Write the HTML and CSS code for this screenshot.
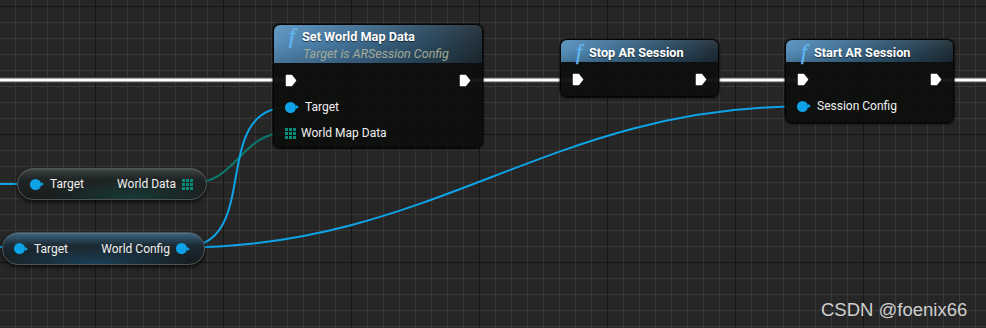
FILE: index.html
```html
<!DOCTYPE html>
<html>
<head>
<meta charset="utf-8">
<link rel="stylesheet" href="styles.css">
</head>
<body>
<div class="graph">
  <svg class="wires" width="986" height="328" viewBox="0 0 986 328">
    <g class="exec-wire">
      <line x1="-5" y1="80" x2="290" y2="80"/>
      <line x1="466" y1="80" x2="578" y2="80"/>
      <line x1="703" y1="80" x2="801" y2="80"/>
      <line x1="938" y1="80" x2="990" y2="80"/>
    </g>
    <g class="exec-core">
      <line x1="-5" y1="80" x2="290" y2="80"/>
      <line x1="466" y1="80" x2="578" y2="80"/>
      <line x1="703" y1="80" x2="801" y2="80"/>
      <line x1="938" y1="80" x2="990" y2="80"/>
    </g>
    <path class="wire blue" d="M -10 184 L 35 184"/>
    <path class="wire blue" d="M -150 236 C -80 236, -50 247.5, 19.5 247.5"/>
    <path class="wire teal" d="M 188 184 C 239 184, 238.5 132, 289.5 132"/>
    <path class="wire blue" d="M 182 247.5 C 265 247.5, 206.5 107, 289.5 107"/>
    <path class="wire blue" d="M 182 247.5 C 435 247.5, 548.5 106.5, 801.5 106.5"/>
  </svg>

  <div class="node fn node-setmap">
    <div class="header tall">
      <div class="title"><span class="fn-icon">f</span><span class="title-text">Set World Map Data</span></div>
      <div class="subtitle">Target is ARSession Config</div>
    </div>
    <div class="body">
      <div class="row">
        <svg class="exec" width="12" height="13" viewBox="0 0 12 13"><path d="M1.5 1.5 H6.5 L10.5 6.5 L6.5 11.5 H1.5 Z"/></svg>
        <svg class="exec" width="12" height="13" viewBox="0 0 12 13"><path d="M1.5 1.5 H6.5 L10.5 6.5 L6.5 11.5 H1.5 Z"/></svg>
      </div>
      <div class="row">
        <div class="pin-in"><span class="dot-pin"></span><span class="label">Target</span></div>
      </div>
      <div class="row">
        <div class="pin-in grid-in"><span class="grid-pin"><i></i><i></i><i></i><i></i><i></i><i></i><i></i><i></i><i></i></span><span class="label">World Map Data</span></div>
      </div>
    </div>
  </div>

  <div class="node fn node-stop">
    <div class="header">
      <div class="title"><span class="fn-icon">f</span><span class="title-text">Stop AR Session</span></div>
    </div>
    <div class="body">
      <div class="row">
        <svg class="exec" width="12" height="13" viewBox="0 0 12 13"><path d="M1.5 1.5 H6.5 L10.5 6.5 L6.5 11.5 H1.5 Z"/></svg>
        <svg class="exec" width="12" height="13" viewBox="0 0 12 13"><path d="M1.5 1.5 H6.5 L10.5 6.5 L6.5 11.5 H1.5 Z"/></svg>
      </div>
    </div>
  </div>

  <div class="node fn node-start">
    <div class="header">
      <div class="title"><span class="fn-icon">f</span><span class="title-text">Start AR Session</span></div>
    </div>
    <div class="body">
      <div class="row">
        <svg class="exec" width="12" height="13" viewBox="0 0 12 13"><path d="M1.5 1.5 H6.5 L10.5 6.5 L6.5 11.5 H1.5 Z"/></svg>
        <svg class="exec" width="12" height="13" viewBox="0 0 12 13"><path d="M1.5 1.5 H6.5 L10.5 6.5 L6.5 11.5 H1.5 Z"/></svg>
      </div>
      <div class="row">
        <div class="pin-in"><span class="dot-pin"></span><span class="label">Session Config</span></div>
      </div>
    </div>
  </div>

  <div class="node pill pill-data">
    <div class="pin-in"><span class="dot-pin"></span><span class="label">Target</span></div>
    <div class="pin-out"><span class="label">World Data</span><span class="grid-pin"><i></i><i></i><i></i><i></i><i></i><i></i><i></i><i></i><i></i></span></div>
  </div>

  <div class="node pill pill-config">
    <div class="pin-in"><span class="dot-pin"></span><span class="label">Target</span></div>
    <div class="pin-out"><span class="label">World Config</span><span class="dot-pin"></span></div>
  </div>

  <div class="watermark">CSDN @foenix66</div>
</div>
</body>
</html>
```

FILE: styles.css
```css
html, body {
  margin: 0;
  padding: 0;
}

body {
  width: 986px;
  height: 328px;
  overflow: hidden;
  font-family: Roboto, "Liberation Sans", sans-serif;
}

.graph {
  position: relative;
  width: 986px;
  height: 328px;
  background-color: #262626;
  background-image:
    linear-gradient(to right, #161616 0, #161616 1.5px, transparent 1.5px),
    linear-gradient(to bottom, #161616 0, #161616 1.5px, transparent 1.5px),
    linear-gradient(to right, #383838 0, #383838 1px, transparent 1px),
    linear-gradient(to bottom, #383838 0, #383838 1px, transparent 1px);
  background-size: 128px 328px, 986px 128px, 16px 328px, 986px 16px;
  background-position: 95px 0, 0 6px, 15px 0, 0 6px;
  overflow: hidden;
}

.wires {
  position: absolute;
  left: 0;
  top: 0;
}

.exec-wire line {
  stroke: #8d8d8d;
  stroke-width: 4.5;
}

.exec-core line {
  stroke: #ffffff;
  stroke-width: 2.5;
}

.wire {
  fill: none;
  stroke-width: 2;
}

.wire.blue {
  stroke: #0ea2e6;
}

.wire.teal {
  stroke: #0b7a6c;
}

.node {
  position: absolute;
  box-sizing: border-box;
}

.fn {
  background: rgba(14, 16, 14, 0.96);
  border: 1px solid #050505;
  border-radius: 7px;
  box-shadow: 0 1px 3px rgba(0, 0, 0, 0.7), 0 0 0 1px rgba(0, 0, 0, 0.35);
  display: flex;
  flex-direction: column;
}

.node-setmap {
  left: 273px;
  top: 24px;
  width: 210px;
  height: 124px;
}

.node-stop {
  left: 560px;
  top: 39px;
  width: 159px;
  height: 58px;
}

.node-start {
  left: 785px;
  top: 39px;
  width: 169px;
  height: 84px;
}

.header {
  height: 23px;
  box-sizing: border-box;
  padding: 4px 10px 0 11px;
  border-radius: 6px 6px 0 0;
  background:
    linear-gradient(180deg, rgba(255, 255, 255, 0.07) 0%, rgba(255, 255, 255, 0) 50%, rgba(0, 0, 0, 0.18) 100%),
    linear-gradient(90deg, #5790bb 0%, #3f6e92 35%, #2b4a60 70%, #1f2d37 100%);
  border-bottom: 1px solid #0c0f12;
}

.header.tall {
  height: 39px;
  padding-top: 3px;
  background:
    linear-gradient(180deg, rgba(255, 255, 255, 0.06) 0%, rgba(255, 255, 255, 0) 40%, rgba(0, 0, 0, 0.2) 100%),
    linear-gradient(90deg, #5a93bf 0%, #43739a 35%, #2e4f66 70%, #222f38 100%);
}

.title {
  display: flex;
  align-items: center;
  height: 16px;
}

.fn-icon {
  font-family: "Liberation Serif", "DejaVu Serif", serif;
  font-style: italic;
  font-size: 21px;
  color: #62b6f0;
  width: 14px;
  line-height: 16px;
  margin-right: 3px;
  text-align: center;
  -webkit-text-stroke: 0.4px #62b6f0;
}

.title-text {
  font-weight: bold;
  font-size: 12.7px;
  color: #ffffff;
  text-shadow: 0 1px 1px rgba(0, 0, 0, 0.6);
}

.subtitle {
  font-style: italic;
  font-size: 12.5px;
  color: #a3ab98;
  margin-left: 18px;
  margin-top: 3px;
  line-height: 14px;
}

.body {
  display: flex;
  flex-direction: column;
  gap: 4px;
  padding: 5px 11px 0 11px;
}

.row {
  height: 22px;
  display: flex;
  align-items: center;
  justify-content: space-between;
}

.row + .row {
  padding-top: 2px;
  box-sizing: border-box;
}

.exec path {
  fill: #ffffff;
  stroke: #ffffff;
  stroke-width: 1.5;
  stroke-linejoin: round;
}

.pin-in, .pin-out {
  display: flex;
  align-items: center;
}

.label {
  font-size: 12px;
  color: #f0f0f0;
  line-height: 14px;
}

.dot-pin {
  position: relative;
  width: 11px;
  height: 11px;
  border-radius: 50%;
  background: #0ea2e6;
  margin-right: 9px;
  flex: none;
}

.dot-pin::after {
  content: "";
  position: absolute;
  right: -3px;
  top: 3.5px;
  border-left: 3px solid #0ea2e6;
  border-top: 2px solid transparent;
  border-bottom: 2px solid transparent;
}

.grid-pin {
  width: 11px;
  height: 11px;
  display: grid;
  grid-template-columns: repeat(3, 3px);
  grid-template-rows: repeat(3, 3px);
  gap: 1px;
  margin-right: 5px;
  flex: none;
}

.grid-pin i {
  background: #0a8c7a;
}

.pill {
  display: flex;
  align-items: center;
  justify-content: space-between;
  border-radius: 16px;
  border: 1px solid #4e5354;
  box-shadow: 0 2px 4px rgba(0, 0, 0, 0.75), inset 0 1px 0 rgba(255, 255, 255, 0.1);
  padding: 0 13px 0 12px;
}

.pill-data {
  left: 17px;
  top: 168px;
  width: 190px;
  height: 32px;
  background:
    radial-gradient(ellipse 45% 60% at 60% 95%, rgba(20, 110, 100, 0.35), rgba(20, 110, 100, 0) 100%),
    linear-gradient(180deg, #3a4242 0%, #1f2424 35%, #181c1c 100%);
}

.pill-config {
  left: 2px;
  top: 232px;
  width: 203px;
  height: 33px;
  padding-left: 11px;
  padding-right: 14px;
  background:
    radial-gradient(ellipse 50% 55% at 45% 100%, rgba(30, 120, 170, 0.4), rgba(30, 120, 170, 0) 100%),
    linear-gradient(180deg, #3a6682 0%, #1c2a33 40%, #171c20 100%);
}

.pill .pin-out .label {
  margin-right: 6px;
}

.pill .pin-out .dot-pin {
  margin-right: 3px;
}

.pill .pin-out .grid-pin {
  margin-right: 0;
}

.watermark {
  position: absolute;
  left: 821px;
  top: 299px;
  font-family: "Liberation Sans", Arial, sans-serif;
  font-size: 18.5px;
  color: #cfcfcf;
  line-height: 22px;
}
```
